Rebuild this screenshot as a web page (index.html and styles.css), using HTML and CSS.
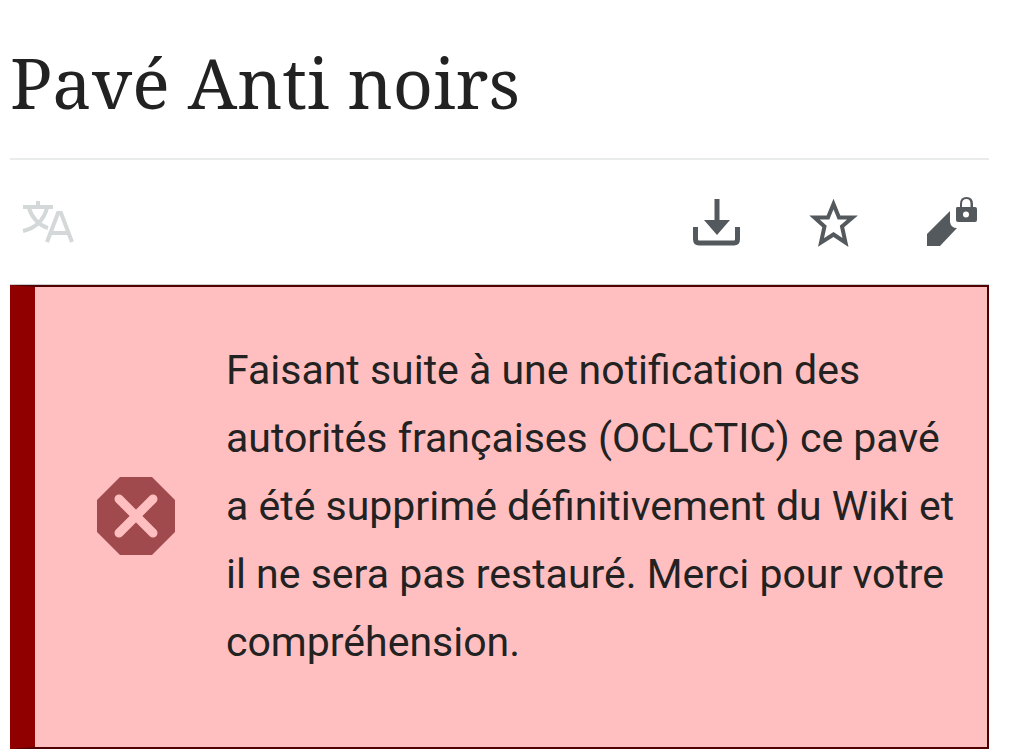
FILE: index.html
```html
<!DOCTYPE html>
<html lang="fr">
<head>
    <meta charset="UTF-8">
    <meta name="viewport" content="width=device-width, initial-scale=1.0">
    <title>Pavé Anti noirs</title>
    <link rel="stylesheet" href="styles.css">
</head>
<body>
    <main class="page">
        <h1 class="title">Pavé Anti noirs</h1>
        <div class="toolbar">
            <button class="tool tool-language" aria-label="Langue" disabled>
                <svg viewBox="0 0 54 48" width="54" height="48" fill="none" stroke="currentColor" stroke-width="4">
                    <path d="M1 9H31M16 3V10M7 10C9 18 16 27 26 30M25 10C22 21 14 30 1 33"/>
                    <path d="M25 44L36 15H39L50 44M29 35H46"/>
                </svg>
            </button>
            <button class="tool" aria-label="Télécharger">
                <svg viewBox="0 0 48 48" width="48" height="48">
                    <path d="M21.500 1H26.500V22H37L24 37L11 22H21.500Z" fill="currentColor"/>
                    <path d="M2.500 29V41Q2.500 45 6 45H41Q44.500 45 44.500 41V29" fill="none" stroke="currentColor" stroke-width="5"/>
                </svg>
            </button>
            <button class="tool" aria-label="Suivre">
                <svg viewBox="0 0 50 50" width="50" height="50" fill="none" stroke="currentColor" stroke-width="4">
                    <path d="M24.500 7L30 20.500H43.500L33 29.500L36.500 45.500L24.500 37.500L12 45.500L15.500 29.500L5.500 20.500H19Z"/>
                </svg>
            </button>
            <button class="tool" aria-label="Page protégée">
                <svg viewBox="0 0 50 50" width="50" height="50" fill="currentColor">
                    <path d="M0 37L23 14V25Q24 31 30 31L13 49H0Z"/>
                    <path fill-rule="evenodd" d="M30 10H33V7Q33 0 39.500 0Q46 0 46 7V10H48Q50 10 50 12V23Q50 25 48 25H31Q29 25 29 23V12Q29 10 30 10ZM35 10H43.500V7Q43.500 2 39.500 2Q35 2 35 7ZM39 14.500A3 3 0 1 0 39 20.500A3 3 0 1 0 39 14.500Z"/>
                </svg>
            </button>
        </div>
        <div class="notice">
            <svg class="notice-icon" viewBox="0 0 78 78" width="78" height="78">
                <path d="M23 0H55L78 23V55L55 78H23L0 55V23Z" fill="#a04a4d"/>
                <path d="M22 22L56 56M56 22L22 56" stroke="#ffbfc0" stroke-width="9" stroke-linecap="round"/>
            </svg>
            <p class="notice-text">Faisant suite à une notification des autorités françaises (OCLCTIC) ce pavé a été supprimé définitivement du Wiki et il ne sera pas restauré. Merci pour votre compréhension.</p>
        </div>
    </main>
</body>
</html>
```
FILE: styles.css
```css
body {
    margin: 0;
    background: #fff;
    color: #222;
    font-family: Roboto, "Liberation Sans", sans-serif;
}
.page {
    margin: 0 35px 0 10px;
}
.title {
    margin: 0;
    padding: 34px 0 28px;
    border-bottom: 2px solid #eaecec;
    font-family: "Noto Serif", "Droid Serif", "DejaVu Serif", serif;
    font-size: 70px;
    font-weight: 400;
    line-height: 96px;
}
.toolbar {
    display: flex;
    align-items: center;
    gap: 68px;
    height: 124px;
    padding: 0 12px;
    border-bottom: 1px solid #c8ccd1;
}
.tool {
    display: flex;
    padding: 0;
    border: none;
    background: none;
    color: #54595d;
    cursor: pointer;
}
.tool-language {
    margin-right: auto;
    color: #d5d8d8;
}
.notice {
    display: flex;
    align-items: center;
    gap: 51px;
    padding: 49px 24px 51px 62px;
    border: 2px solid #500000;
    border-left: 25px solid #900000;
    background: #ffbfc0;
}
.notice-icon {
    flex: none;
}
.notice-text {
    margin: 0;
    padding-bottom: 20px;
    font-size: 41px;
    line-height: 68px;
}
```
